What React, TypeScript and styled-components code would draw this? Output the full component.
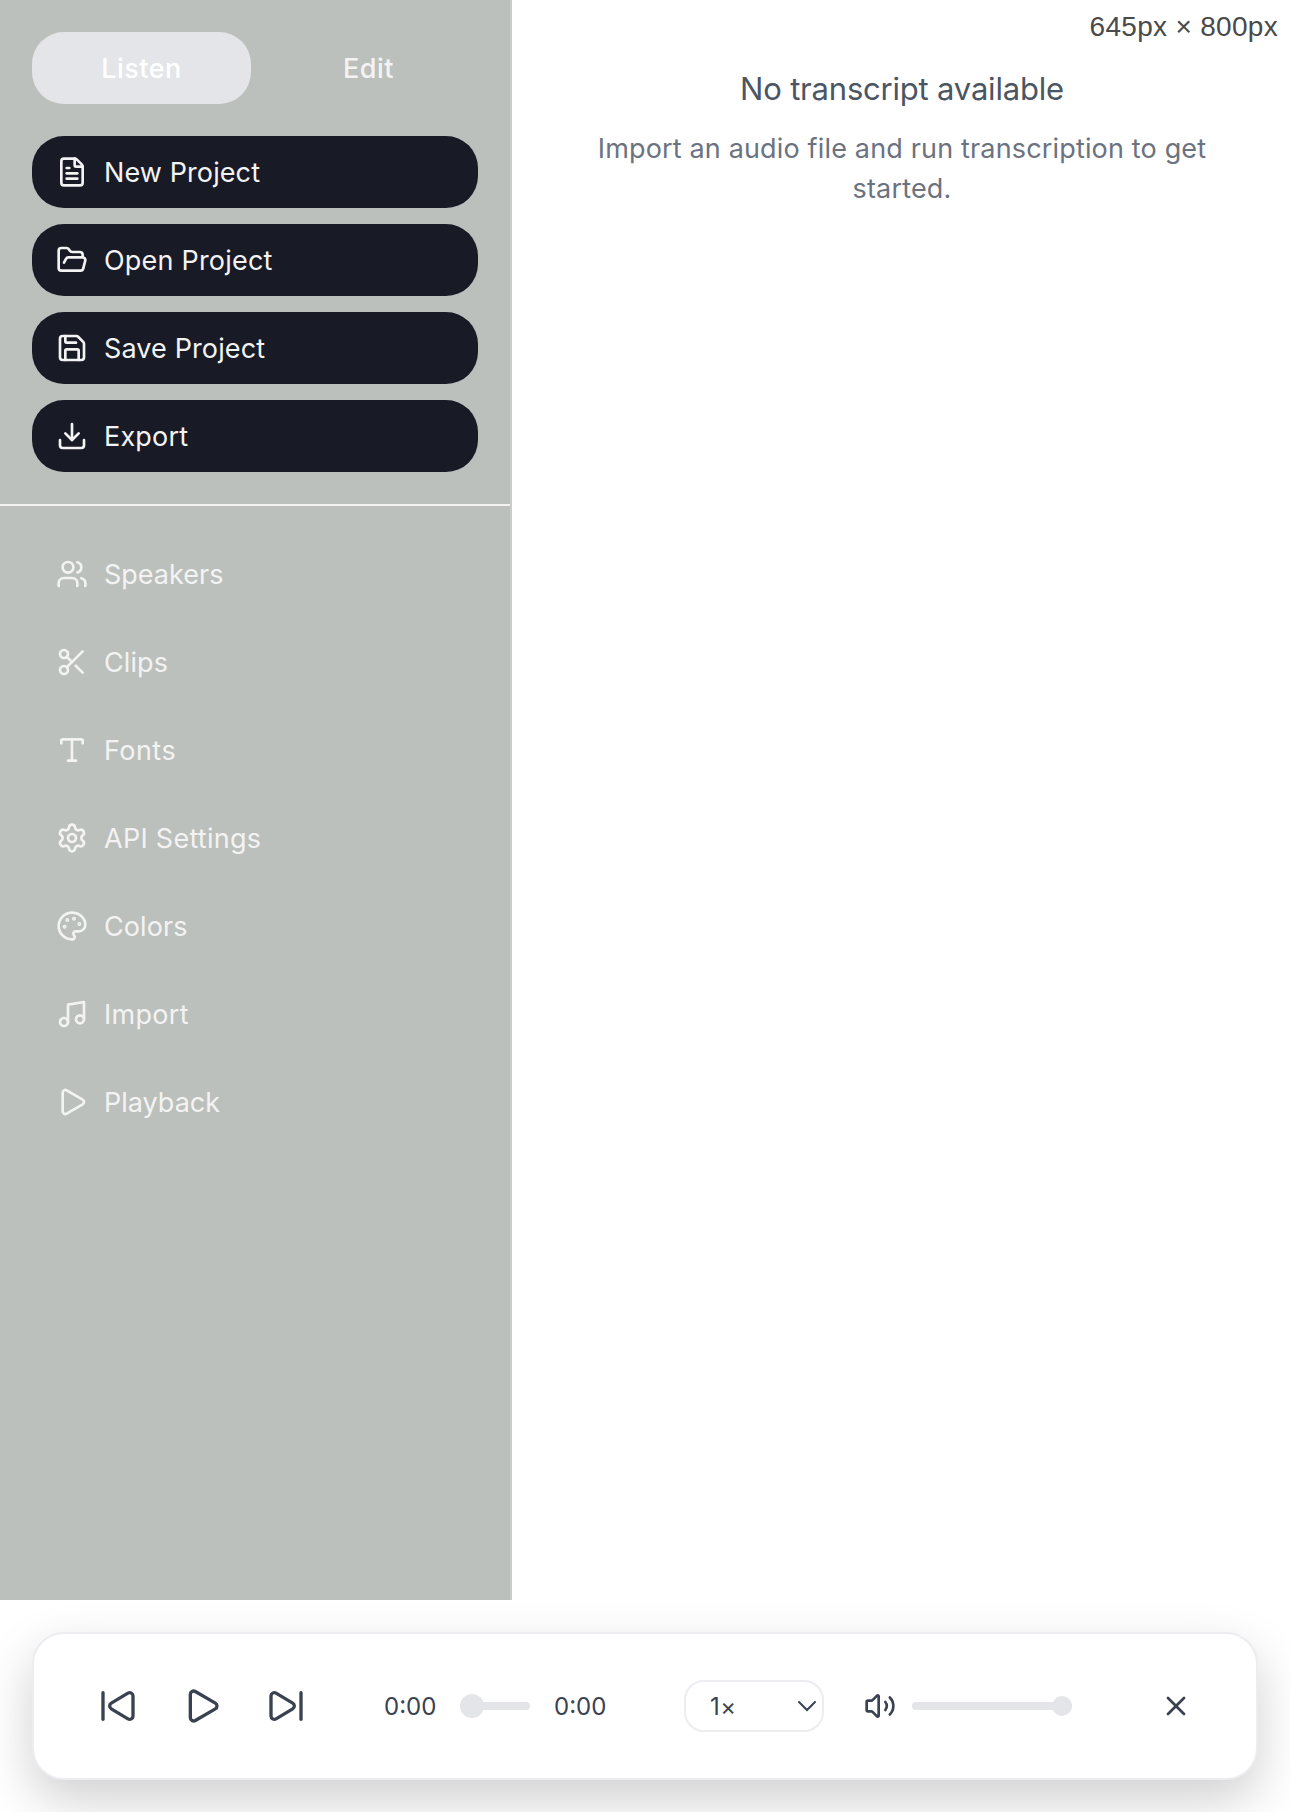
import React from "react";
import styled, { createGlobalStyle } from "styled-components";
import {
  Download,
  FileText,
  FolderOpen,
  Music,
  Palette,
  Play,
  Save,
  Scissors,
  Settings,
  SkipBack,
  SkipForward,
  Type,
  Users,
  Volume2,
  X,
} from "lucide-react";

const GlobalStyle = createGlobalStyle`
  *, *::before, *::after { box-sizing: border-box; }
  body { margin: 0; background: #ffffff; }
  button { border: 0; padding: 0; margin: 0; background: none; font: inherit; color: inherit; }
`;

const Page = styled.div`
  position: relative;
  display: flex;
  flex-direction: column;
  width: 1290px;
  height: 1812px;
  overflow: hidden;
  background: #ffffff;
  font-family: Inter, "Liberation Sans", sans-serif;
  font-size: 28px;
  line-height: 40px;
`;

const Workspace = styled.div`
  display: flex;
  height: 1600px;
  flex: none;
`;

const Sidebar = styled.aside`
  width: 512px;
  flex: none;
  background: #bbc0bc;
  border-right: 2px solid #cbccca;
  color: #f3f3f3;
`;

const SidebarTop = styled.div`
  display: flex;
  flex-direction: column;
  gap: 32px;
  padding: 32px;
  border-bottom: 2px solid #f3f3f3;
`;

const Tabs = styled.div`
  display: grid;
  grid-template-columns: 1fr 1fr;
  gap: 8px;
`;

const Tab = styled.button<{ $active?: boolean }>`
  height: 72px;
  padding-top: 2px;
  border-radius: 32px;
  font-weight: 500;
  font-size: 27px;
  letter-spacing: 0.45px;
  color: ${(p) => (p.$active ? "#ffffff" : "#f3f3f3")};
  background: ${(p) => (p.$active ? "#e4e5e9" : "transparent")};
`;

const Stack = styled.div`
  display: flex;
  flex-direction: column;
  gap: 16px;
`;

const Nav = styled.nav`
  display: flex;
  flex-direction: column;
  gap: 16px;
  padding: 32px;
`;

const MenuButton = styled.button<{ $filled?: boolean }>`
  display: flex;
  align-items: center;
  gap: 16px;
  height: 72px;
  padding: 0 24px;
  border-radius: 32px;
  text-align: left;
  background: ${(p) => (p.$filled ? "#181a25" : "transparent")};
`;

const MenuLabel = styled.span<{ $spacing: number }>`
  padding-top: 2px;
  font-size: 27px;
  letter-spacing: ${(p) => p.$spacing}px;
  white-space: nowrap;
`;

const Main = styled.main`
  flex: 1;
  display: flex;
  flex-direction: column;
  align-items: center;
  padding: 64px 62px 0 64px;
  text-align: center;
`;

const EmptyTitle = styled.h2`
  margin: 0;
  padding-top: 1px;
  font-size: 31px;
  line-height: 48px;
  font-weight: 400;
  letter-spacing: -0.2px;
  color: #4b5563;
`;

const EmptyHint = styled.p`
  margin: 16px 0 0;
  width: 640px;
  font-size: 27px;
  line-height: 40px;
  letter-spacing: 0.16px;
  color: #6b7280;
`;

const SizeBadge = styled.div`
  position: absolute;
  top: 11px;
  right: 12px;
  font-family: "Liberation Sans", Arial, sans-serif;
  font-size: 28px;
  line-height: 32px;
  letter-spacing: 0.3px;
  color: #4a4a4a;
`;

const PlayerArea = styled.div`
  flex: 1;
  padding: 32px;
  overflow: hidden;
`;

const Player = styled.section`
  display: flex;
  align-items: center;
  height: 148px;
  padding: 0 64px;
  border: 2px solid #ececf1;
  border-radius: 32px;
  background: #ffffff;
  color: #3a4151;
  box-shadow: 0 20px 50px rgba(0, 0, 0, 0.19);
`;

const Transport = styled.div`
  display: flex;
  align-items: center;
  gap: 44px;
`;

const IconButton = styled.button`
  display: grid;
  place-items: center;
`;

const Timeline = styled.div`
  display: flex;
  align-items: center;
  gap: 24px;
  margin-left: 78px;
`;

const Time = styled.span`
  width: 52px;
  padding-top: 2px;
  font-size: 24px;
  line-height: 32px;
  white-space: nowrap;
`;

const Track = styled.div<{ $width: number; $end?: boolean; $thumb: number }>`
  display: flex;
  align-items: center;
  justify-content: ${(p) => (p.$end ? "flex-end" : "flex-start")};
  width: ${(p) => p.$width}px;
  height: 8px;
  border-radius: 4px;
  background: #e4e5e9;

  &::before {
    content: "";
    flex: none;
    width: ${(p) => p.$thumb}px;
    height: ${(p) => p.$thumb}px;
    border-radius: 50%;
    background: #e4e5e9;
  }
`;

const Speed = styled.button`
  display: flex;
  align-items: center;
  justify-content: space-between;
  width: 140px;
  height: 52px;
  margin-left: 78px;
  padding: 0 5px 0 24px;
  border: 2px solid #ececf1;
  border-radius: 20px;
  font-size: 24px;
  line-height: 32px;
`;

const SpeedValue = styled.span`
  padding-top: 2px;
  letter-spacing: 0.4px;
`;

const Volume = styled.div`
  display: flex;
  align-items: center;
  gap: 16px;
  margin-left: 40px;
`;

const CloseSlot = styled.div`
  margin-left: 88px;
`;

const projectActions = [
  { label: "New Project", icon: FileText, spacing: 0.1 },
  { label: "Open Project", icon: FolderOpen, spacing: 0.2 },
  { label: "Save Project", icon: Save, spacing: 0.12 },
  { label: "Export", icon: Download, spacing: 0.2 },
];

const tools = [
  { label: "Speakers", icon: Users, spacing: 0 },
  { label: "Clips", icon: Scissors, spacing: 0.1 },
  { label: "Fonts", icon: Type, spacing: 0.45 },
  { label: "API Settings", icon: Settings, spacing: 0.27 },
  { label: "Colors", icon: Palette, spacing: 0.1 },
  { label: "Import", icon: Music, spacing: 0.3 },
  { label: "Playback", icon: Play, spacing: 0 },
];

export default function App() {
  return (
    <Page>
      <GlobalStyle />
      <Workspace>
        <Sidebar>
          <SidebarTop>
            <Tabs>
              <Tab $active>Listen</Tab>
              <Tab>Edit</Tab>
            </Tabs>
            <Stack>
              {projectActions.map(({ label, icon: Icon, spacing }) => (
                <MenuButton key={label} $filled>
                  <Icon size={32} />
                  <MenuLabel $spacing={spacing}>{label}</MenuLabel>
                </MenuButton>
              ))}
            </Stack>
          </SidebarTop>
          <Nav>
            {tools.map(({ label, icon: Icon, spacing }) => (
              <MenuButton key={label}>
                <Icon size={32} />
                <MenuLabel $spacing={spacing}>{label}</MenuLabel>
              </MenuButton>
            ))}
          </Nav>
        </Sidebar>
        <Main>
          <EmptyTitle>No transcript available</EmptyTitle>
          <EmptyHint>Import an audio file and run transcription to get started.</EmptyHint>
        </Main>
      </Workspace>
      <PlayerArea>
        <Player>
          <Transport>
            <IconButton aria-label="Previous"><SkipBack size={40} /></IconButton>
            <IconButton aria-label="Play"><Play size={40} /></IconButton>
            <IconButton aria-label="Next"><SkipForward size={40} /></IconButton>
          </Transport>
          <Timeline>
            <Time>0:00</Time>
            <Track $width={70} $thumb={24} />
            <Time>0:00</Time>
          </Timeline>
          <Speed>
            <SpeedValue>1×</SpeedValue>
            <svg width="20" height="12" viewBox="0 0 20 12" fill="none" stroke="currentColor" strokeWidth="2" strokeLinecap="round">
              <path d="M2 2l8 8 8-8" />
            </svg>
          </Speed>
          <Volume>
            <Volume2 size={32} />
            <Track $width={160} $thumb={20} $end />
          </Volume>
          <CloseSlot>
            <IconButton aria-label="Close"><X size={32} /></IconButton>
          </CloseSlot>
        </Player>
      </PlayerArea>
      <SizeBadge>645px × 800px</SizeBadge>
    </Page>
  );
}
